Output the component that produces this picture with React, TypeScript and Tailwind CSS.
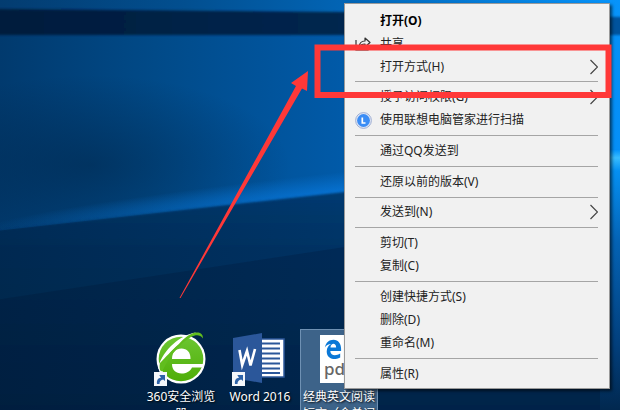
import { ReactNode } from "react";

type Item = { label: string; key?: string; bold?: boolean; sub?: boolean; icon?: ReactNode };

const ShareIcon = () => (
  <svg viewBox="0 0 16 16" className="h-4 w-4" fill="none" stroke="#333" strokeWidth="1.2" aria-hidden="true">
    <path d="M1 4v10h12v-2" />
    <path d="M4 11c.4-4 2.600-6 6-6V2l5 4.500-5 4.500V8c-2.800 0-4.600.8-6 3z" strokeLinejoin="round" />
  </svg>
);

const GuardIcon = () => (
  <svg viewBox="0 0 17 17" className="h-[17px] w-[17px]" aria-hidden="true">
    <circle cx="8.500" cy="8.500" r="7.900" fill="#dfe6f5" stroke="#9aa9cf" strokeWidth=".9" />
    <circle cx="8.500" cy="8.500" r="6.400" fill="#3b8df5" />
    <path d="M7.300 5.500v5.500h3.200" stroke="#fff" strokeWidth="1.700" fill="none" />
  </svg>
);

const groups: Item[][] = [
  [
    { label: "打开", key: "O", bold: true },
    { label: "共享", icon: <ShareIcon /> },
    { label: "打开方式", key: "H", sub: true },
  ],
  [
    { label: "授予访问权限", key: "G", sub: true },
    { label: "使用联想电脑管家进行扫描", icon: <GuardIcon /> },
  ],
  [{ label: "通过QQ发送到" }],
  [{ label: "还原以前的版本", key: "V" }],
  [{ label: "发送到", key: "N", sub: true }],
  [
    { label: "剪切", key: "T" },
    { label: "复制", key: "C" },
  ],
  [
    { label: "创建快捷方式", key: "S" },
    { label: "删除", key: "D" },
    { label: "重命名", key: "M" },
  ],
  [{ label: "属性", key: "R" }],
];

function MenuRow({ item }: { item: Item }) {
  return (
    <button
      type="button"
      role="menuitem"
      className={`flex h-[23px] w-full shrink-0 items-center pr-[11px] pl-[10px] text-left whitespace-nowrap ${item.bold ? "font-bold text-black" : "text-[#222]"}`}
    >
      <span className="flex w-[25px] shrink-0 items-center">{item.icon}</span>
      <span className="grow">
        {item.label}
        {item.key && `(${item.key})`}
      </span>
      {item.sub && (
        <svg viewBox="0 0 8 16" className="h-4 w-2" fill="none" stroke="#444" strokeWidth="1.200" aria-hidden="true">
          <path d="M.5 1l7 7-7 7" />
        </svg>
      )}
    </button>
  );
}

function ContextMenu() {
  return (
    <div
      role="menu"
      className="absolute top-[3px] right-[10px] bottom-[21px] flex w-[266px] flex-col border border-[#9a9a9a] bg-[#f1f1f1] pt-[5px] pb-[3px] text-[12px] shadow-[2px_2px_3px_rgba(0,0,0,0.6)]"
    >
      {groups.map((group, i) => (
        <div key={i} className="contents">
          {i > 0 && (
            <div role="separator" className="mr-[11px] ml-[10px] flex flex-1 items-center">
              <div className="h-px w-full bg-[#a5a5a5]" />
            </div>
          )}
          {group.map((item) => (
            <MenuRow key={item.label} item={item} />
          ))}
        </div>
      ))}
    </div>
  );
}

function Wallpaper() {
  return (
    <svg viewBox="0 0 620 410" preserveAspectRatio="none" className="absolute inset-0 h-full w-full" aria-hidden="true">
      <defs>
        <linearGradient id="top" x1="0" x2="1">
          <stop offset="0" stopColor="#033c70" />
          <stop offset=".3" stopColor="#024f90" />
          <stop offset=".55" stopColor="#0264b4" />
          <stop offset="1" stopColor="#0794fb" />
        </linearGradient>
        <linearGradient id="band" x1="0" x2="1">
          <stop offset="0" stopColor="#011c3c" />
          <stop offset=".55" stopColor="#01264f" />
          <stop offset="1" stopColor="#02549f" />
        </linearGradient>
        <linearGradient id="pane" x1="0" x2="1">
          <stop offset="0" stopColor="#013a6e" />
          <stop offset=".25" stopColor="#014a88" />
          <stop offset=".55" stopColor="#015aa8" />
          <stop offset="1" stopColor="#0590f8" />
        </linearGradient>
        <linearGradient id="floor" x1="0" y1="0" x2="0" y2="1">
          <stop offset="0" stopColor="#013f78" />
          <stop offset=".35" stopColor="#013364" />
          <stop offset="1" stopColor="#01284f" />
        </linearGradient>
        <linearGradient id="dim" x1="0" x2="1">
          <stop offset="0" stopColor="#001226" stopOpacity=".3" />
          <stop offset="1" stopColor="#001226" stopOpacity="0" />
        </linearGradient>
        <linearGradient id="edge" x1="0" y1="0" x2="0" y2="1">
          <stop offset="0" stopColor="#0594fb" />
          <stop offset=".03" stopColor="#38bdff" />
          <stop offset=".08" stopColor="#0590f2" />
          <stop offset=".35" stopColor="#0463b5" />
          <stop offset=".75" stopColor="#023f7c" />
          <stop offset="1" stopColor="#01284f" />
        </linearGradient>
        <radialGradient id="glow">
          <stop offset="0" stopColor="#0878dc" stopOpacity=".8" />
          <stop offset="1" stopColor="#0878dc" stopOpacity="0" />
        </radialGradient>
        <radialGradient id="shade">
          <stop offset="0" stopColor="#00203f" stopOpacity=".45" />
          <stop offset="1" stopColor="#00203f" stopOpacity="0" />
        </radialGradient>
        <filter id="soft">
          <feGaussianBlur stdDeviation="1" />
        </filter>
      </defs>
      <rect width="620" height="410" fill="url(#pane)" />
      <rect width="620" height="20" fill="url(#top)" />
      <path d="M-5 9L345 12L625 17V35H-5z" fill="url(#band)" filter="url(#soft)" />
      <ellipse cx="90" cy="165" rx="200" ry="90" fill="url(#shade)" />
      <ellipse cx="360" cy="190" rx="380" ry="20" fill="url(#glow)" transform="rotate(-6 360 190)" />
      <path d="M-5 231L345 192L630 161V415H-5z" fill="url(#floor)" filter="url(#soft)" />
      <path d="M-5 300L345 247L630 204V415H-5z" fill="#001b3c" opacity=".3" />
      <path d="M-5 231L345 192V415H-5z" fill="url(#dim)" />
      <rect x="600" y="150" width="20" height="260" fill="url(#edge)" />
    </svg>
  );
}

const Shortcut = () => (
  <g>
    <rect x="0" y="0" width="13" height="14" fill="#f4f7fb" />
    <path d="M3 12c-.5-4 1-6 4-6.300L5.300 3H11v6L9.200 7.500C6.800 8 5.500 9.500 5.500 12z" fill="#2d62a8" />
  </g>
);

function BrowserIcon() {
  return (
    <svg viewBox="0 0 58 56" className="h-14 w-[58px]" aria-hidden="true">
      <defs>
        <linearGradient id="leaf" x1="0" y1="0" x2="0" y2="1">
          <stop offset="0" stopColor="#6cc631" />
          <stop offset="1" stopColor="#4fae08" />
        </linearGradient>
      </defs>
      <circle cx="29" cy="28" r="24.500" fill="#fff" />
      <circle cx="29" cy="28" r="22.300" fill="url(#leaf)" />
      <path d="M20 28C20 21 24 17.500 29.500 17.500S38.500 21 38.500 28z" fill="#fff" />
      <path d="M20 33H52V36.500H40C38 40.500 34 42.500 29.500 42.500C24 42.500 20 39 20 33z" fill="#fff" />
      <path d="M6 36C12 18 28 4 44 1.500C37 5 30 10 24 16C16 23 11 31 8 42z" fill="#fff" />
      <path d="M27 13C33 6 39 2 44 1.500c5-.5 7 2 7 6-3-4-7-4-12-1.500C30 11 18 23 11 39C8 43 7 36 8 32C13 27 20 19 27 13z" fill="#61bd1e" />
      <g transform="translate(2 41)"><Shortcut /></g>
    </svg>
  );
}

function WordIcon() {
  return (
    <svg viewBox="0 0 58 56" className="h-14 w-[58px]" aria-hidden="true">
      <rect x="28" y="8" width="25" height="38" fill="#fff" stroke="#2b579a" strokeWidth="1.500" />
      <path d="M30 12.500h19M30 17.500h19M30 22.500h19M30 27.500h19M30 32.500h19M30 37.500h19M30 42h19" stroke="#2b579a" strokeWidth="2" />
      <path d="M2 7L31 2v50L2 47z" fill="#2b579a" />
      <path d="M8.500 19l2.700 15L16 20l3.500 14.500L24 18" fill="none" stroke="#fff" strokeWidth="2.600" />
      <g transform="translate(1 41)"><Shortcut /></g>
    </svg>
  );
}

function PdfIcon() {
  return (
    <span className="flex h-12 w-[38px] flex-col items-start bg-white pl-1">
      <svg viewBox="0 0 20 20" className="mt-1 h-5 w-[18px]" preserveAspectRatio="none" aria-hidden="true">
        <path d="M1 8.500C2 3.500 6 .8 10.500.8c5.500 0 8.500 4 8.500 9V12H7c.3 5 6.500 5 11 2.500v4C11 22 3 19.500 3 12.500c0-4 2.300-6.300 5-7.500C4.500 5 2.500 6.500 1 8.500zM7.200 8.500h6.300c0-5-6-4.800-6.300 0z" fill="#0a78d7" />
      </svg>
      <span className="text-[17px] leading-5 font-medium text-[#666]">pdf</span>
    </span>
  );
}

function DesktopItem({ icon, selected, children }: { icon: ReactNode; selected?: boolean; children: ReactNode }) {
  return (
    <button
      type="button"
      className={`flex h-[100px] w-[78px] flex-col items-center border text-center text-[12px] leading-[17px] text-white [text-shadow:1px_1px_2px_#000] ${selected ? "border-[#6f91b3] bg-[#3d6389]" : "border-transparent"}`}
    >
      <span className="flex h-[58px] items-center [text-shadow:none]">{icon}</span>
      <span className="w-full">{children}</span>
    </button>
  );
}

export default function App() {
  return (
    <main className="relative h-screen w-full overflow-hidden bg-[#012147] font-['Noto_Sans','Noto_Sans_CJK_SC',sans-serif]">
      <Wallpaper />
      <div className="absolute top-[329px] left-[142px] flex gap-px">
        <DesktopItem icon={<BrowserIcon />}>360安全浏览器</DesktopItem>
        <DesktopItem icon={<WordIcon />}>Word 2016</DesktopItem>
        <DesktopItem icon={<PdfIcon />} selected>
          经典英文阅读短文（含单词
        </DesktopItem>
      </div>
      <ContextMenu />
      <svg viewBox="0 0 620 410" preserveAspectRatio="none" className="pointer-events-none absolute inset-0 h-full w-full" aria-hidden="true">
        <path d="M179.500 298L296 86l-5-3L308 71l-1 20-5-2.500L180.500 298z" fill="#ff3838" />
        <rect x="317.500" y="47.500" width="291" height="47.500" fill="none" stroke="#ff3838" strokeWidth="6" />
      </svg>
    </main>
  );
}
